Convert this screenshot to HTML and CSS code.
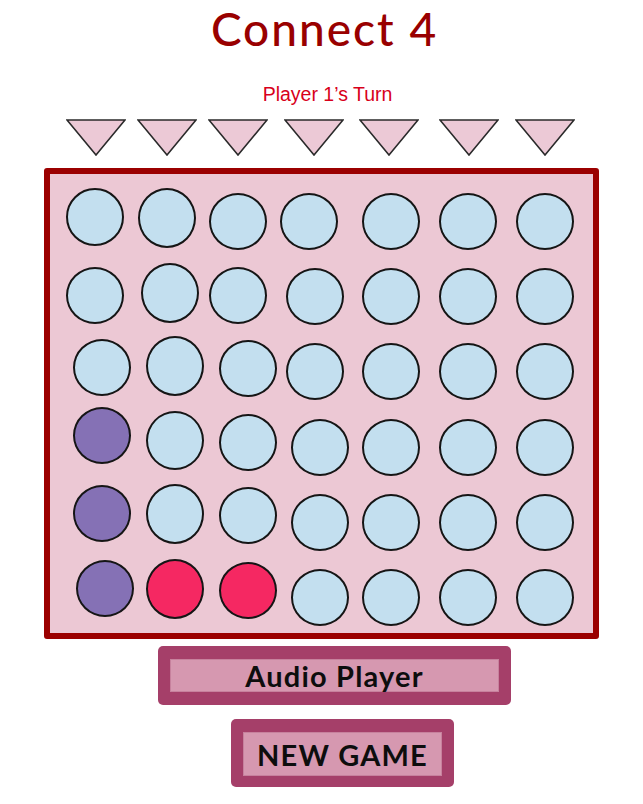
FILE: index.html
```html
<!DOCTYPE html>
<html lang="en">
<head>
<meta charset="utf-8">
<title>Connect 4</title>
<link rel="stylesheet" href="styles.css">
</head>
<body>
<main class="app">
  <h1 class="title">Connect 4</h1>
  <p class="status">Player 1’s Turn</p>
  <div class="drops">
    <svg class="drop" viewBox="0 0 60 37" width="60" height="37"><polygon points="1,1 59,1 30,36"/></svg>
    <svg class="drop" viewBox="0 0 60 37" width="60" height="37"><polygon points="1,1 59,1 30,36"/></svg>
    <svg class="drop" viewBox="0 0 60 37" width="60" height="37"><polygon points="1,1 59,1 30,36"/></svg>
    <svg class="drop" viewBox="0 0 60 37" width="60" height="37"><polygon points="1,1 59,1 30,36"/></svg>
    <svg class="drop" viewBox="0 0 60 37" width="60" height="37"><polygon points="1,1 59,1 30,36"/></svg>
    <svg class="drop" viewBox="0 0 60 37" width="60" height="37"><polygon points="1,1 59,1 30,36"/></svg>
    <svg class="drop" viewBox="0 0 60 37" width="60" height="37"><polygon points="1,1 59,1 30,36"/></svg>
  </div>
  <div class="board">
    <div class="cell"></div><div class="cell"></div><div class="cell"></div><div class="cell"></div><div class="cell"></div><div class="cell"></div><div class="cell"></div>
    <div class="cell"></div><div class="cell"></div><div class="cell"></div><div class="cell"></div><div class="cell"></div><div class="cell"></div><div class="cell"></div>
    <div class="cell"></div><div class="cell"></div><div class="cell"></div><div class="cell"></div><div class="cell"></div><div class="cell"></div><div class="cell"></div>
    <div class="cell purple"></div><div class="cell"></div><div class="cell"></div><div class="cell"></div><div class="cell"></div><div class="cell"></div><div class="cell"></div>
    <div class="cell purple"></div><div class="cell"></div><div class="cell"></div><div class="cell"></div><div class="cell"></div><div class="cell"></div><div class="cell"></div>
    <div class="cell purple"></div><div class="cell red"></div><div class="cell red"></div><div class="cell"></div><div class="cell"></div><div class="cell"></div><div class="cell"></div>
  </div>
  <div class="btn audio"><span class="btn-inner">Audio Player</span></div>
  <button class="btn newgame"><span class="btn-inner">NEW GAME</span></button>
</main>
</body>
</html>
```

FILE: styles.css
```css
html, body {
  margin: 0;
  padding: 0;
  background: #ffffff;
}

.app {
  width: 643px;
  display: flex;
  flex-direction: column;
  align-items: flex-start;
}

.title {
  align-self: stretch;
  margin: 0;
  padding-top: 1px;
  padding-left: 6px;
  font-family: Lato, "Open Sans", sans-serif;
  font-weight: 500;
  font-size: 46px;
  line-height: 56px;
  letter-spacing: 2px;
  color: #990000;
  text-align: center;
}

.status {
  align-self: stretch;
  margin: 26px 0 0 0;
  font-family: "Liberation Sans", Arial, sans-serif;
  font-size: 19.5px;
  line-height: 22px;
  color: #d8001a;
  text-align: center;
  padding-left: 12px;
}

.drops {
  display: grid;
  grid-template-columns: 71px 71px 76px 75px 80px 76px 60px;
  margin: 14px 0 0 66px;
  height: 37px;
}

.drop {
  display: block;
}

.drop polygon {
  fill: #ecc9d6;
  stroke: #2a2a2a;
  stroke-width: 1.6;
  stroke-linejoin: miter;
}

.board {
  box-sizing: border-box;
  width: 555px;
  height: 471px;
  margin: 12px 0 0 44px;
  border: 6px solid #9b0000;
  border-radius: 3px;
  background: #ecc8d4;
  display: grid;
  grid-template-columns: 73px 73px 72px 71px 77px 77px 58px;
  grid-template-rows: repeat(6, 57px);
  row-gap: 18.2px;
  padding: 19px 0 0 23px;
}

.cell {
  box-sizing: border-box;
  width: 58px;
  height: 57px;
  border: 2px solid #151515;
  border-radius: 50%;
  background: #c3dfef;
}

.cell.purple { background: #8571b5; }
.cell.red { background: #f52862; }

/* hand-drawn nudges of the left columns */
.cell:nth-child(1)  { translate: -7px -5px; height: 58px; }
.cell:nth-child(2)  { translate: -8px -5px; height: 60px; }
.cell:nth-child(3)  { translate: -10px 0; }
.cell:nth-child(4)  { translate: -11px 0; }
.cell:nth-child(8)  { translate: -7px -1px; }
.cell:nth-child(9)  { translate: -5px -5px; height: 60px; }
.cell:nth-child(10) { translate: -10px -1px; }
.cell:nth-child(11) { translate: -5px 0; }
.cell:nth-child(15) { translate: 0 -4px; }
.cell:nth-child(16) { translate: 0 -7px; height: 60px; }
.cell:nth-child(17) { translate: 0 -3px; }
.cell:nth-child(18) { translate: -5px 0; }
.cell:nth-child(22) { translate: 0 -12px; }
.cell:nth-child(23) { translate: 0 -8px; height: 59px; }
.cell:nth-child(24) { translate: 0 -5px; }
.cell:nth-child(29) { translate: 0 -9px; }
.cell:nth-child(30) { translate: 0 -10px; height: 60px; }
.cell:nth-child(31) { translate: 0 -7px; }
.cell:nth-child(36) { translate: 3px -9px; }
.cell:nth-child(37) { translate: 0 -10px; height: 60px; }
.cell:nth-child(38) { translate: 0 -7px; }

.btn {
  box-sizing: border-box;
  display: flex;
  align-items: center;
  justify-content: center;
  background: #a53f69;
  border: none;
  border-radius: 5px;
  padding: 13px 12px;
  margin: 0;
  font: inherit;
}

.btn-inner {
  flex: 1;
  align-self: stretch;
  display: flex;
  align-items: center;
  justify-content: center;
  background: #d698b0;
  box-shadow: inset 0 0 0 1px #c7819d;
  font-family: Lato, "Open Sans", sans-serif;
  font-weight: 700;
  font-size: 29px;
  letter-spacing: 1.2px;
  color: #0d0d0d;
}

.audio {
  width: 353px;
  height: 59px;
  margin: 7px 0 0 158px;
}

.newgame {
  width: 223px;
  height: 68px;
  margin: 14px 0 0 231px;
  padding: 13px 12px 11px;
}
```
